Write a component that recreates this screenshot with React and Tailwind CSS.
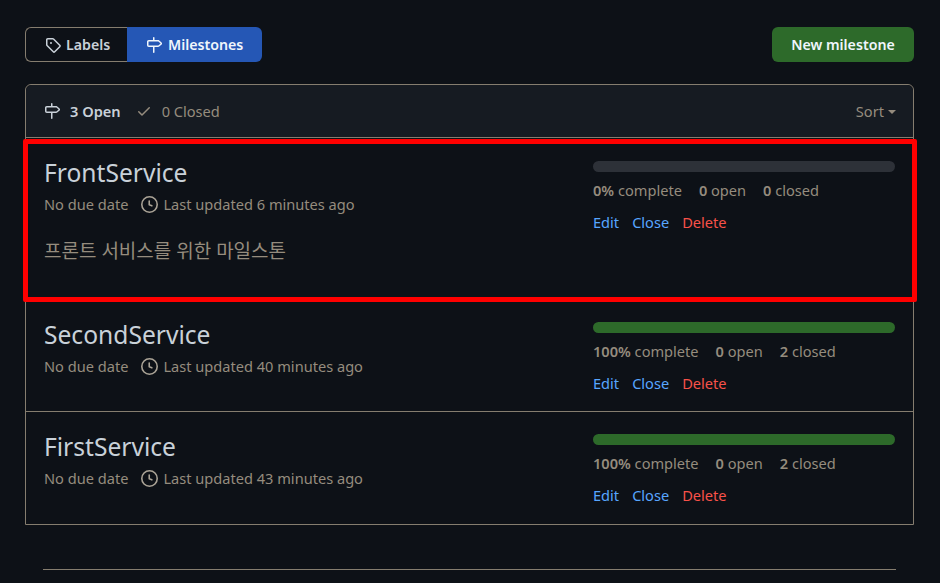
const milestonePath = "M7.75 0a.75.75 0 0 1 .75.75V3h3.634c.414 0 .814.147 1.13.414l2.07 1.75a1.75 1.75 0 0 1 0 2.672l-2.07 1.75a1.75 1.75 0 0 1-1.13.414H8.5v5.25a.75.75 0 0 1-1.5 0V10H2.75A1.75 1.75 0 0 1 1 8.25v-3.5C1 3.784 1.784 3 2.75 3H7V.75A.75.75 0 0 1 7.75 0Zm4.384 8.5a.25.25 0 0 0 .161-.059l2.07-1.75a.25.25 0 0 0 0-.382l-2.07-1.75a.25.25 0 0 0-.161-.059H2.75a.25.25 0 0 0-.25.25v3.5c0 .138.112.25.25.25h9.384Z";
const tagPath = "M1 7.775V2.75C1 1.784 1.784 1 2.75 1h5.025c.464 0 .91.184 1.238.513l6.25 6.25a1.75 1.75 0 0 1 0 2.474l-5.026 5.026a1.75 1.75 0 0 1-2.474 0l-6.25-6.25A1.752 1.752 0 0 1 1 7.775Zm1.5 0c0 .066.026.13.073.177l6.25 6.25a.25.25 0 0 0 .354 0l5.025-5.025a.25.25 0 0 0 0-.354l-6.25-6.25a.25.25 0 0 0-.177-.073H2.75a.25.25 0 0 0-.25.25ZM6 5a1 1 0 1 1 0 2 1 1 0 0 1 0-2Z";
const checkPath = "M13.78 4.22a.75.75 0 0 1 0 1.06l-7.25 7.25a.75.75 0 0 1-1.06 0L2.22 9.28a.751.751 0 0 1 .018-1.042.751.751 0 0 1 1.042-.018L6 10.94l6.72-6.72a.75.75 0 0 1 1.06 0Z";
const clockPath = "M8 0a8 8 0 1 1 0 16A8 8 0 0 1 8 0ZM1.5 8a6.5 6.5 0 1 0 13 0 6.5 6.5 0 0 0-13 0Zm7-3.25v2.992l2.028.812a.75.75 0 0 1-.557 1.392l-2.5-1A.751.751 0 0 1 7 8.25v-3.5a.75.75 0 0 1 1.5 0Z";

function Icon({ d, className }) {
  return (
    <svg viewBox="0 0 16 16" fill="currentColor" className={className}>
      <path d={d} />
    </svg>
  );
}

function Milestone({ title, updated, percent, open, closed, description, rowClass, rightClass }) {
  return (
    <div className={"flex pl-[18px] pr-[18px] " + rowClass}>
      <div className="flex-1">
        <div className="text-[24.6px] leading-[30px] text-[#c9d1d9] mt-[20px]">{title}</div>
        <div className="flex items-center text-[14.6px] leading-[20px] text-[#958c7e] mt-[6px]">
          <span>No due date</span>
          <Icon d={clockPath} className="w-[17px] h-[17px] ml-[13px] mr-[5px] text-[#aaa396]" />
          <span>Last updated {updated}</span>
        </div>
        {description && (
          <div className="text-[19px] leading-[24px] text-[#958c7e] mt-[25px]">{description}</div>
        )}
      </div>
      <div className={"w-[302px] " + rightClass}>
        <div className="h-[11px] rounded-md bg-[#2d3138] overflow-hidden">
          {percent > 0 && <div className="h-full bg-[#2d6a2a]" style={{ width: percent + "%" }} />}
        </div>
        <div className="flex gap-[17px] text-[14.6px] leading-[20px] text-[#958c7e] mt-[8px]">
          <span><b className="font-semibold">{percent}%</b> complete</span>
          <span><b className="font-semibold">{open}</b> open</span>
          <span><b className="font-semibold">{closed}</b> closed</span>
        </div>
        <div className="flex gap-[13px] text-[14.6px] leading-[20px] mt-[12px]">
          <span className="text-[#58a6ff]">Edit</span>
          <span className="text-[#58a6ff]">Close</span>
          <span className="text-[#f85149]">Delete</span>
        </div>
      </div>
    </div>
  );
}

export default function App() {
  return (
    <div className="relative h-[583px] overflow-hidden bg-[#0d1117] pl-[25px] pr-[26px] pt-[27px] font-['Noto_Sans','Noto_Sans_CJK_KR',sans-serif]">
      <div className="flex justify-between">
        <div className="flex h-[35px] text-[14.2px] font-semibold">
          <div className="flex items-center gap-[5px] w-[102px] pl-[19px] border border-r-0 border-[#857d6f] rounded-l-md text-[#c9d1d9]">
            <Icon d={tagPath} className="w-4 h-4" />
            Labels
          </div>
          <div className="flex items-center gap-[5px] w-[135px] pl-[19px] bg-[#2557b5] rounded-r-md text-[#f0f6fc]">
            <Icon d={milestonePath} className="w-4 h-4" />
            <span className="ml-[1px]">Milestones</span>
          </div>
        </div>
        <div className="flex items-center justify-center w-[142px] h-[35px] rounded-md bg-[#2d6a2a] text-[14.2px] font-semibold text-[#f0f6fc]">
          New milestone
        </div>
      </div>

      <div className="mt-[22px] border border-[#857d6f] rounded-t-md">
        <div className="flex items-center justify-between h-[53px] pt-[1px] pl-[18px] pr-[17px] bg-[#161b22] rounded-t-md border-b border-[#857d6f] text-[14.6px]">
          <div className="flex items-center">
            <Icon d={milestonePath} className="w-4 h-4 text-[#c9d1d9]" />
            <span className="ml-[10px] font-semibold text-[#c9d1d9]">3 Open</span>
            <Icon d={checkPath} className="w-4 h-4 ml-[15px] text-[#958c7e]" />
            <span className="ml-[10px] text-[#958c7e]">0 Closed</span>
          </div>
          <div className="flex items-center text-[#958c7e]">
            Sort
            <span className="ml-[4px] mt-[1px] border-x-[4.5px] border-x-transparent border-t-[4px] border-t-[#958c7e]" />
          </div>
        </div>
        <Milestone rowClass="h-[162px]" rightClass="pt-[23px]" title="FrontService" updated="6 minutes ago" percent={0} open={0} closed={0} description="프론트 서비스를 위한 마일스톤" />
        <Milestone rowClass="h-[112px] border-b border-[#857d6f]" rightClass="pt-[22px]" title="SecondService" updated="40 minutes ago" percent={100} open={0} closed={2} />
        <Milestone rowClass="h-[112px]" rightClass="pt-[22px]" title="FirstService" updated="43 minutes ago" percent={100} open={0} closed={2} />
      </div>

      <div className="mt-[44px] mx-[18px] border-t border-[#857d6f]" />

      {/* red annotation box drawn over the first row */}
      <div className="absolute left-[23px] top-[139px] w-[894px] h-[163px] border-[5px] border-[#ff0000] rounded-[2px]" />
    </div>
  );
}
